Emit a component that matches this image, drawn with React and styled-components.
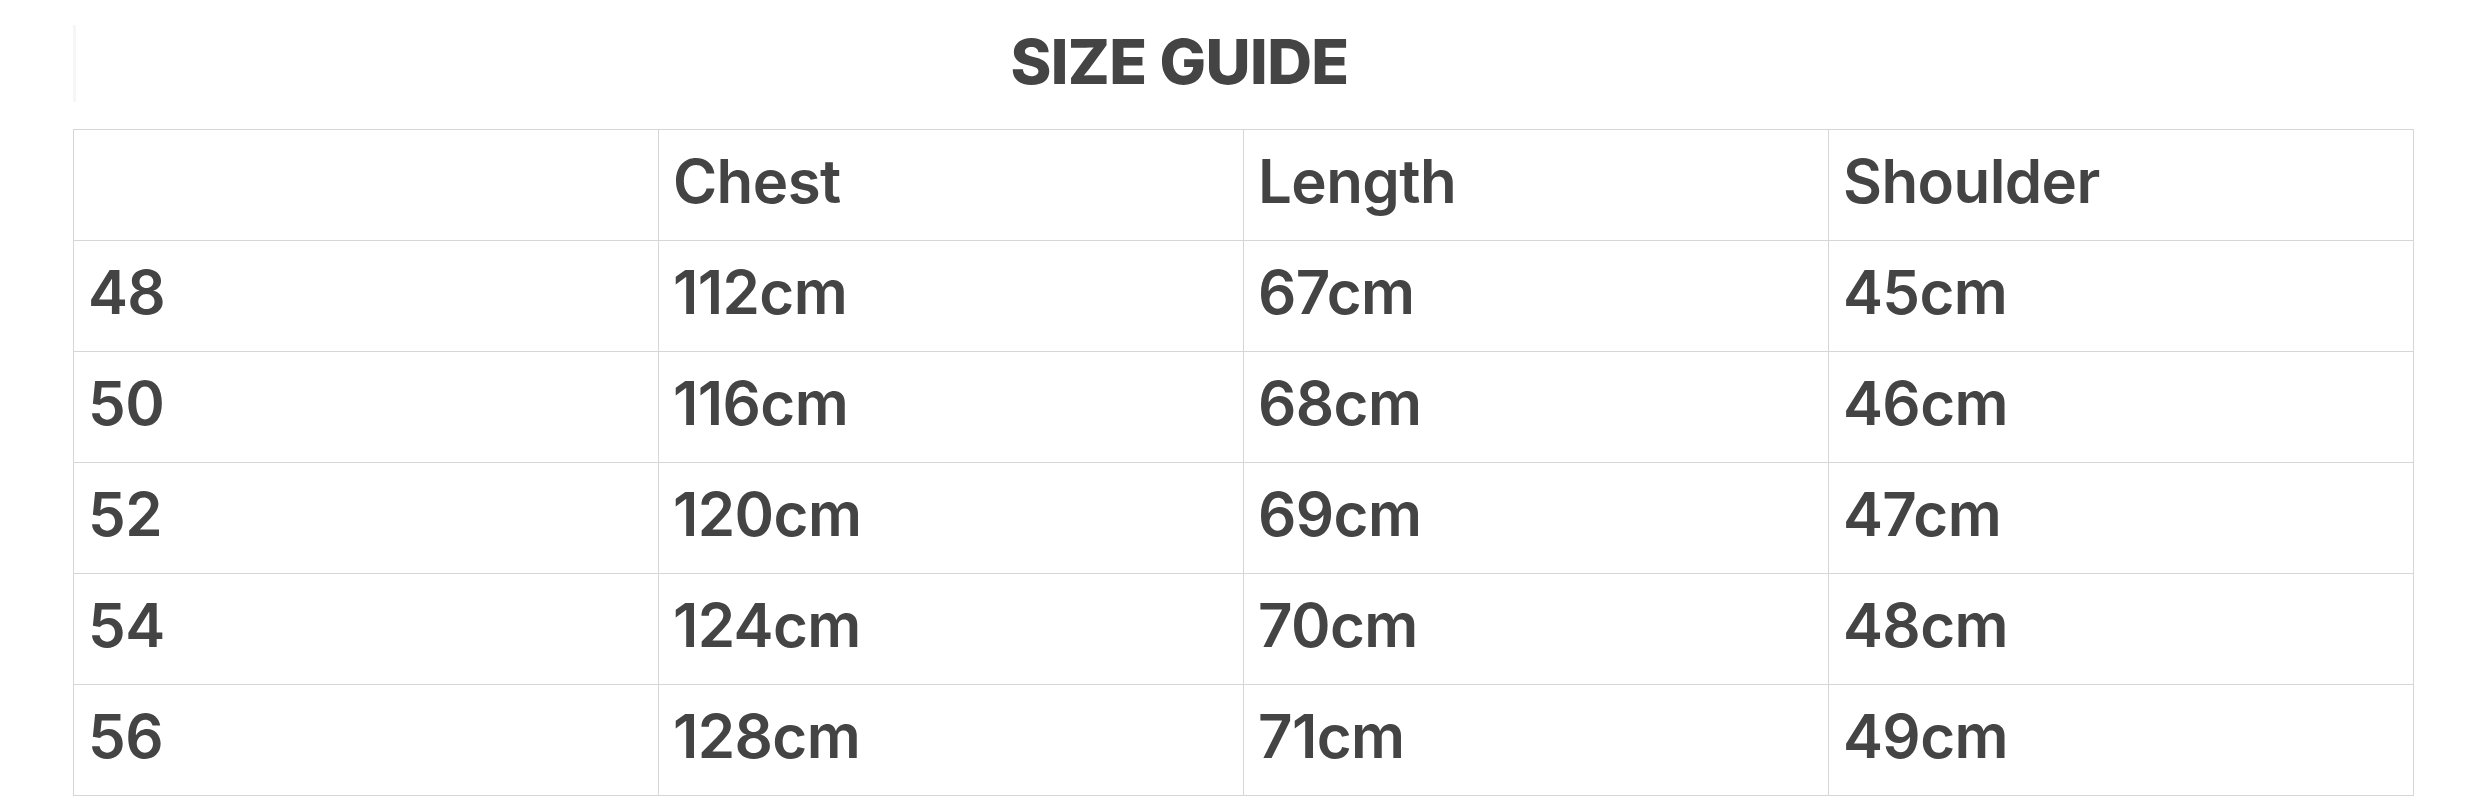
import React from "react";
import styled, { createGlobalStyle } from "styled-components";

const GlobalStyle = createGlobalStyle`
  html, body {
    margin: 0;
    padding: 0;
    background: #ffffff;
  }
  body {
    font-family: Inter, "Liberation Sans", Arial, sans-serif;
    color: #444444;
  }
`;

const Page = styled.div`
  padding: 25px 0 0 73px;
  display: flex;
  flex-direction: column;
  align-items: flex-start;
`;

const TitleBox = styled.div`
  width: 2210px;
  height: 77px;
  padding-bottom: 3px;
  display: flex;
  align-items: center;
  justify-content: center;
  border-left: 3px solid #f6f6f6;
  box-sizing: border-box;
`;

const Title = styled.h1`
  margin: 0;
  font-family: Inter, "Liberation Sans", Arial, sans-serif;
  font-size: 62px;
  line-height: 62px;
  font-weight: 800;
  letter-spacing: -0.6px;
  color: #444444;
`;

const Table = styled.table`
  margin-top: 27px;
  width: 2341px;
  table-layout: fixed;
  border-collapse: collapse;
`;

const Cell = styled.td`
  border: 1px solid #d6d6d6;
  padding: 15px 14px 22px;
  height: 73px;
  box-sizing: content-box;
  font-family: Inter, "Liberation Sans", Arial, sans-serif;
  font-size: 60px;
  line-height: 73px;
  font-weight: 600;
  letter-spacing: -0.6px;
  color: #444444;
  text-align: left;
  vertical-align: top;
  white-space: nowrap;
`;

const HeadCell = styled(Cell).attrs({ as: "th" })``;

const headers = ["", "Chest", "Length", "Shoulder"];
const rows = [
  ["48", "112cm", "67cm", "45cm"],
  ["50", "116cm", "68cm", "46cm"],
  ["52", "120cm", "69cm", "47cm"],
  ["54", "124cm", "70cm", "48cm"],
  ["56", "128cm", "71cm", "49cm"],
];

export default function App() {
  return (
    <>
      <GlobalStyle />
      <Page>
        <TitleBox>
          <Title>SIZE GUIDE</Title>
        </TitleBox>
        <Table>
          <thead>
            <tr>
              {headers.map((h, i) => (
                <HeadCell key={i}>{h}</HeadCell>
              ))}
            </tr>
          </thead>
          <tbody>
            {rows.map((r) => (
              <tr key={r[0]}>
                {r.map((c, i) => (
                  <Cell key={i}>{c}</Cell>
                ))}
              </tr>
            ))}
          </tbody>
        </Table>
      </Page>
    </>
  );
}
